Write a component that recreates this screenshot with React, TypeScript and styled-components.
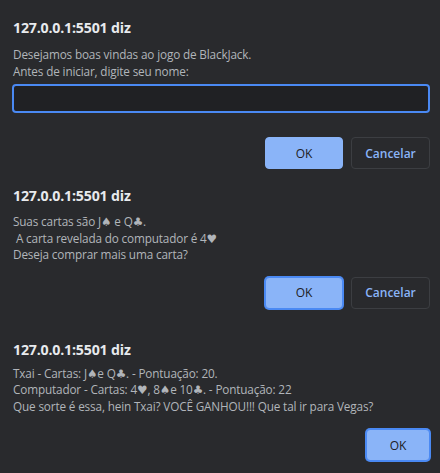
import React from "react";
import styled, { createGlobalStyle, css } from "styled-components";

const Global = createGlobalStyle`
  html, body { margin: 0; padding: 0; background: #292a2d; }
  body { font-family: "Open Sans", "Noto Sans", "DejaVu Sans", sans-serif; }
  * { box-sizing: border-box; }
`;

const Page = styled.div`
  width: 440px;
  height: 473px;
  background: #292a2d;
  padding: 18px 10px 0 12px;
  display: flex;
  flex-direction: column;
  overflow: hidden;
`;

const Dialog = styled.section<{ $top: number }>`
  display: flex;
  flex-direction: column;
  margin-top: ${(p) => p.$top}px;
`;

const Title = styled.h2<{ $gap: number }>`
  margin: 0 0 ${(p) => p.$gap}px 1px;
  font-size: 14.2px;
  line-height: 20px;
  font-weight: 700;
  color: #e8eaed;
  letter-spacing: -0.2px;
`;

const Message = styled.p`
  margin: 0 0 0 1px;
  font-size: 11.75px;
  line-height: 16.5px;
  color: #b1b5ba;
  white-space: pre;
  letter-spacing: -0.15px;
`;

const NameInput = styled.input`
  margin-top: 5px;
  width: 100%;
  height: 29px;
  background: #202124;
  border: 2px solid #4a89f3;
  border-radius: 4px;
  outline: none;
  color: #e8eaed;
  font-family: inherit;
  font-size: 12px;
  padding: 0 6px;
`;

const ButtonRow = styled.div<{ $top: number }>`
  display: flex;
  justify-content: flex-end;
  gap: 8px;
  margin-top: ${(p) => p.$top}px;
`;

const Button = styled.button<{ $primary?: boolean; $focused?: boolean; $w: number }>`
  width: ${(p) => p.$w}px;
  height: 32px;
  border-radius: 4px;
  font-family: inherit;
  font-size: 12px;
  padding: 0;
  cursor: pointer;
  ${(p) =>
    p.$primary
      ? css`
          background: #8ab4f8;
          color: #202124;
          border: 1px solid #8ab4f8;
          font-weight: 400;
        `
      : css`
          background: transparent;
          color: #8ab4f8;
          border: 1px solid #3c3e42;
          font-weight: 600;
        `}
  ${(p) =>
    p.$focused &&
    css`
      border-color: #4a89f3;
      box-shadow: 0 0 0 1px #4a89f3;
    `}
`;

export default function App() {
  return (
    <>
      <Global />
      <Page>
        <Dialog $top={0}>
          <Title $gap={8}>127.0.0.1:5501 diz</Title>
          <Message>
            {"Desejamos boas vindas ao jogo de BlackJack.\nAntes de iniciar, digite seu nome:"}
          </Message>
          <NameInput type="text" />
          <ButtonRow $top={24}>
            <Button $primary $w={78}>OK</Button>
            <Button $w={79}>Cancelar</Button>
          </ButtonRow>
        </Dialog>

        <Dialog $top={17}>
          <Title $gap={7}>127.0.0.1:5501 diz</Title>
          <Message>
            {"Suas cartas são J♠ e Q♣.\n A carta revelada do computador é 4♥\nDeseja comprar mais uma carta?"}
          </Message>
          <ButtonRow $top={14}>
            <Button $primary $focused $w={78}>OK</Button>
            <Button $w={79}>Cancelar</Button>
          </ButtonRow>
        </Dialog>

        <Dialog $top={31}>
          <Title $gap={5}>127.0.0.1:5501 diz</Title>
          <Message>
            {"Txai - Cartas: J♠e Q♣. - Pontuação: 20.\nComputador - Cartas: 4♥, 8♠e 10♣. - Pontuação: 22\nQue sorte é essa, hein Txai? VOCÊ GANHOU!!! Que tal ir para Vegas?"}
          </Message>
          <ButtonRow $top={15}>
            <Button $primary $focused $w={64}>OK</Button>
          </ButtonRow>
        </Dialog>
      </Page>
    </>
  );
}
